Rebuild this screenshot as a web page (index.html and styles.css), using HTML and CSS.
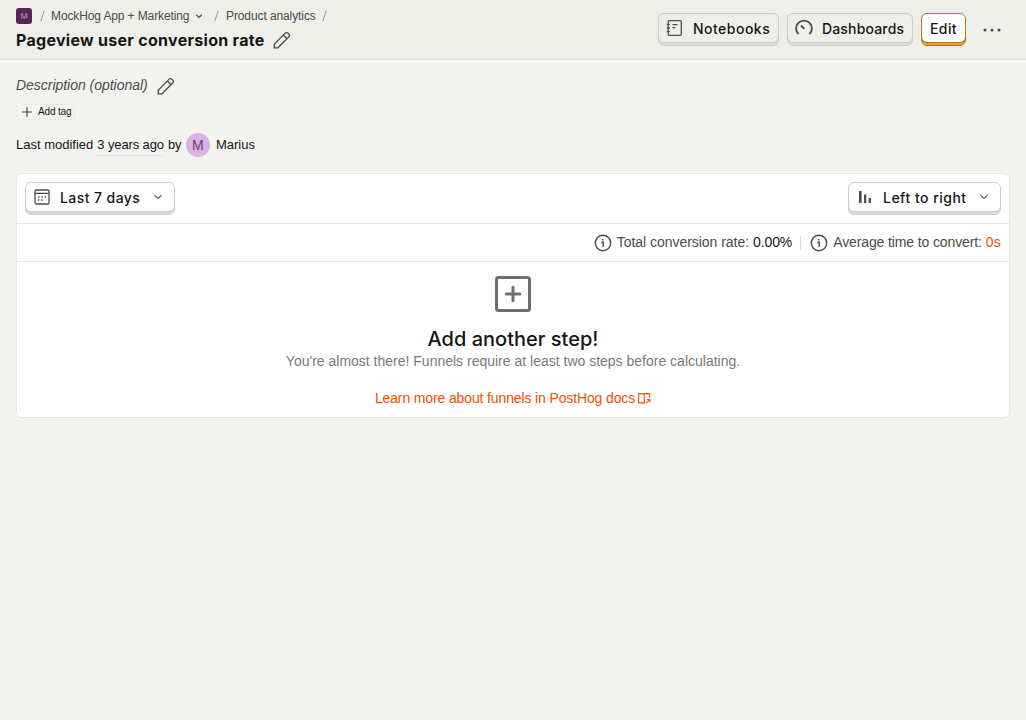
FILE: index.html
```html
<!DOCTYPE html>
<html lang="en">
<head>
<meta charset="utf-8">
<title>Pageview user conversion rate</title>
<link rel="stylesheet" href="styles.css">
</head>
<body>
<header class="topbar">
  <div class="heading">
    <nav class="crumbs">
      <span class="project">M</span>
      <svg class="slash slash-first" width="5" height="12" viewBox="0 0 5 12"><path d="M4.2.8.8 11.2"/></svg>
      <span class="crumb-app">MockHog App + Marketing</span>
      <svg class="crumb-chevron" width="8" height="8" viewBox="0 0 8 8"><path d="M1.2 2.7 4 5.4 6.8 2.7"/></svg>
      <svg class="slash slash-mid" width="5" height="12" viewBox="0 0 5 12"><path d="M4.2.8.8 11.2"/></svg>
      <span class="crumb-product">Product analytics</span>
      <svg class="slash slash-last" width="5" height="12" viewBox="0 0 5 12"><path d="M4.2.8.8 11.2"/></svg>
    </nav>
    <div class="title-row">
      <h1 class="title">Pageview user conversion rate</h1>
      <svg class="pencil" width="18" height="18" viewBox="0 0 18 18"><path d="M1.2 16.8v-3.6L12.2 2.1a1.9 1.9 0 0 1 2.7 0l1 1a1.9 1.9 0 0 1 0 2.7L4.9 16.8zM10.4 4l3.7 3.7"/></svg>
    </div>
  </div>
  <div class="actions">
    <button class="btn btn-notebooks">
      <svg class="icon" width="18" height="18" viewBox="0 0 18 18"><path d="M3.2 1.7h11.1a1 1 0 0 1 1 1v12.6a1 1 0 0 1-1 1H3.2a1 1 0 0 1-1-1V2.7a1 1 0 0 1 1-1zM.8 5.3h3M.8 9h3M.8 12.6h3M6.4 5.6h5M6.4 8.6h3"/></svg>
      <span class="label-notebooks">Notebooks</span>
    </button>
    <button class="btn btn-dashboards">
      <svg class="icon gauge" width="18" height="18" viewBox="0 0 18 18"><path d="M3.6 15.2A7.9 7.9 0 1 1 14.4 15.2M6 6.5 9.4 9.8"/></svg>
      <span class="label-dashboards">Dashboards</span>
    </button>
    <button class="btn btn-edit"><span class="label-edit">Edit</span></button>
    <svg class="dots" width="18" height="4" viewBox="0 0 18 4"><circle cx="2" cy="2" r="1.5"/><circle cx="9" cy="2" r="1.5"/><circle cx="16" cy="2" r="1.5"/></svg>
  </div>
</header>
<main class="page">
  <div class="description-row">
    <span class="description">Description (optional)</span>
    <svg class="pencil" width="18" height="18" viewBox="0 0 18 18"><path d="M1.2 16.8v-3.6L12.2 2.1a1.9 1.9 0 0 1 2.7 0l1 1a1.9 1.9 0 0 1 0 2.7L4.9 16.8zM10.4 4l3.7 3.7"/></svg>
  </div>
  <div class="tag">
    <svg class="plus" width="10" height="10" viewBox="0 0 10 10"><path d="M5 0v10M0 5h10"/></svg>
    <span class="tag-label">Add tag</span>
  </div>
  <div class="modified">
    <span class="modified-text">Last modified</span>
    <span class="modified-when">3 years ago</span>
    <span class="modified-by">by</span>
    <span class="avatar">M</span>
    <span class="modified-name">Marius</span>
  </div>
  <section class="card">
    <div class="filters">
      <button class="btn btn-white btn-days">
        <svg class="icon" width="18" height="18" viewBox="0 0 18 18"><path d="M3.2 2h11.6A1.2 1.2 0 0 1 16 3.2v11.6a1.2 1.2 0 0 1-1.2 1.2H3.2A1.2 1.2 0 0 1 2 14.800V3.200A1.2 1.2 0 0 1 3.200 2zM2 5.300h14"/><path d="M5 9h1.400M8.300 9h1.400M11.600 9H13M5 12h1.400M8.300 12h1.400"/></svg>
        <span class="label-days">Last 7 days</span>
        <svg class="chevron" width="10" height="10" viewBox="0 0 10 10"><path d="M1.4 3.2 5 6.5 8.6 3.2"/></svg>
      </button>
      <button class="btn btn-white btn-layout">
        <svg class="bars" width="14" height="14" viewBox="0 0 14 14"><path d="M1 1h2.6v12H1zM6 4.5h2.3V13H6zM10.6 8h2.3v5h-2.3z"/></svg>
        <span class="label-layout">Left to right</span>
        <svg class="chevron" width="10" height="10" viewBox="0 0 10 10"><path d="M1.4 3.2 5 6.5 8.6 3.2"/></svg>
      </button>
    </div>
    <div class="metrics">
      <svg class="info" width="18" height="18" viewBox="0 0 18 18"><circle cx="9" cy="9" r="7.700"/><path d="M7.300 8.200h1.900v4.600M8.800 5v1.500"/></svg>
      <span class="metric-total">Total conversion rate:</span>
      <span class="metric-rate">0.00%</span>
      <span class="divider"></span>
      <svg class="info" width="18" height="18" viewBox="0 0 18 18"><circle cx="9" cy="9" r="7.700"/><path d="M7.300 8.200h1.900v4.600M8.800 5v1.500"/></svg>
      <span class="metric-avg">Average time to convert:</span>
      <span class="metric-time">0s</span>
    </div>
    <div class="empty">
      <svg class="plus-box" width="36" height="36" viewBox="0 0 36 36"><rect x="1.5" y="1.5" width="33" height="33" rx="2"/><path d="M18 11.2v13.6M11.2 18h13.6"/></svg>
      <h2 class="empty-title">Add another step!</h2>
      <p class="empty-text">You're almost there! Funnels require at least two steps before calculating.</p>
      <a class="docs"><span class="docs-label">Learn more about funnels in PostHog docs</span><svg class="docs-icon" width="13" height="11" viewBox="0 0 13 11"><path d="M11.700 5V.6H.6v9.300h5.600M6.200.6v9.300l1-1M8.400 9.900l3.100-3.100M9 6.500h2.700v2.700"/></svg></a>
    </div>
  </section>
</main>
</body>
</html>
```
FILE: styles.css
```css
* { box-sizing: border-box; }
body { margin: 0; height: 720px; overflow: hidden; background: #f3f4ef; color: #151515; font: 13px/20px "Liberation Sans", Arial, sans-serif; }
svg { display: block; flex: none; fill: none; stroke: #4b4b48; stroke-width: 1.3; }
span { white-space: nowrap; }

.topbar { display: flex; justify-content: space-between; height: 60px; padding: 0 25px 0 16px; background: #eeefe9; border-bottom: 1px solid #dadbd6; }
.heading { padding-top: 8px; }
.crumbs { display: flex; align-items: center; height: 16px; font-size: 12px; line-height: 16px; color: #4b4b48; }
.project { width: 16px; height: 16px; border-radius: 3px; background: #572858; color: #bd95bf; text-align: center; font: 400 8px/16px Inter, sans-serif; }
.slash { stroke: #989994; stroke-width: 1; }
.slash-first { margin: 0 6px 0 8px; }
.crumb-app { width: 139px; letter-spacing: -0.12px; }
.crumb-chevron { margin: 0 11px 0 5px; }
.slash-mid { margin-right: 7px; }
.crumb-product { width: 90px; letter-spacing: -0.1px; }
.slash-last { margin-left: 6px; }
.title-row { display: flex; align-items: center; gap: 8px; height: 32px; }
.title { margin: 0; font: 700 16px/24px Inter, sans-serif; letter-spacing: 0.29px; }

.actions { display: flex; align-items: flex-start; gap: 8px; padding-top: 13px; }
.btn { display: flex; align-items: center; height: 33px; padding: 0 8px 2px 7px; border: 1px solid #cccccb; border-radius: 6px; background: #eeefe9; box-shadow: inset 0 -2px #dcdada, inset 0 -3px #cccccb; color: #151515; font: 500 14px/20px Inter, sans-serif; }
.btn .icon { margin-bottom: 2px; }
.btn-notebooks { width: 121px; gap: 9px; }
.btn-dashboards { width: 126px; gap: 9px; }
.btn-edit { width: 45px; padding-left: 8px; background: #fff; border-color: #b17816; box-shadow: inset 0 -2px #eb9d2a, inset 0 -3px #b17816; }
.label-notebooks { letter-spacing: 0.48px; }
.label-dashboards { letter-spacing: 0.16px; }
.label-edit { letter-spacing: 0.4px; }
.gauge { stroke-width: 1.8; }
.dots { margin: 15px 0 0 9px; fill: #4b4b48; stroke: none; }

.page { padding: 14px 16px 0; }
.description-row { display: flex; align-items: center; gap: 9px; height: 24px; }
.description { padding-bottom: 2px; color: #4b4b48; font-size: 14px; font-style: italic; letter-spacing: -0.03px; }
.tag { display: flex; align-items: center; gap: 6px; width: 59px; height: 16px; margin-top: 6px; padding-left: 5px; border: 1px dashed #e5e5e5; border-radius: 4px; font-size: 10px; line-height: 14px; letter-spacing: -0.15px; }
.plus { stroke-width: 1.2; }
.modified { display: flex; align-items: center; height: 24px; margin-top: 13px; }
.modified-when { margin: 0 4px; border-bottom: 1px dotted #d5d6d1; line-height: 20px; letter-spacing: -0.12px; }
.modified-by { width: 13px; letter-spacing: -0.2px; }
.avatar { width: 24px; height: 24px; margin: 0 6px 0 5px; border-radius: 50%; background: #dcb1e3; color: #683f6c; text-align: center; font-size: 14px; line-height: 24px; }

.card { height: 245px; margin-top: 16px; border: 1px solid #e5e7e7; border-radius: 6px; background: #fff; }
.filters { display: flex; justify-content: space-between; height: 50px; padding: 8px; border-bottom: 1px solid #e5e5e8; }
.btn-white { background: #fff; }
.btn-days { width: 150px; gap: 9px; }
.btn-layout { width: 153px; padding-left: 9px; gap: 11px; }
.label-days { letter-spacing: 0.42px; }
.label-layout { letter-spacing: 0.49px; }
.chevron { margin: 0 3px 2px auto; stroke-width: 1.1; }
.bars { margin-bottom: 2px; fill: #4b4b48; stroke: none; }
.metrics { display: flex; align-items: center; justify-content: flex-end; height: 38px; padding-right: 8px; border-bottom: 1px solid #e5e5e8; font-size: 14px; color: #4b4b48; }
.metrics span { padding-bottom: 1px; }
.info { stroke-width: 1.5; }
.metric-total { margin: 0 4px 0 5px; letter-spacing: -0.04px; }
.metric-avg { margin: 0 4px 0 5px; letter-spacing: -0.12px; }
.metric-rate { color: #151515; letter-spacing: -0.1px; }
.metric-time { color: #f54e00; letter-spacing: 0.2px; }
.divider { width: 1px; height: 14px; margin: 0 9px 0 8px; background: #dadbd6; }

.empty { display: flex; flex-direction: column; align-items: center; padding-top: 14px; }
.plus-box { stroke: #6e6e6e; stroke-width: 3; stroke-linecap: round; }
.empty-title { margin: 13px 0 0; font: 500 20px/28px Inter, sans-serif; }
.empty-text { margin: 0; font-size: 14px; line-height: 16px; color: #7a7a78; }
.docs { display: flex; align-items: center; gap: 3px; margin-top: 19px; font-size: 14px; line-height: 20px; color: #f54e00; }
.docs-label { letter-spacing: -0.13px; }
.docs-icon { stroke: #f54e00; stroke-width: 1.1; }
```
